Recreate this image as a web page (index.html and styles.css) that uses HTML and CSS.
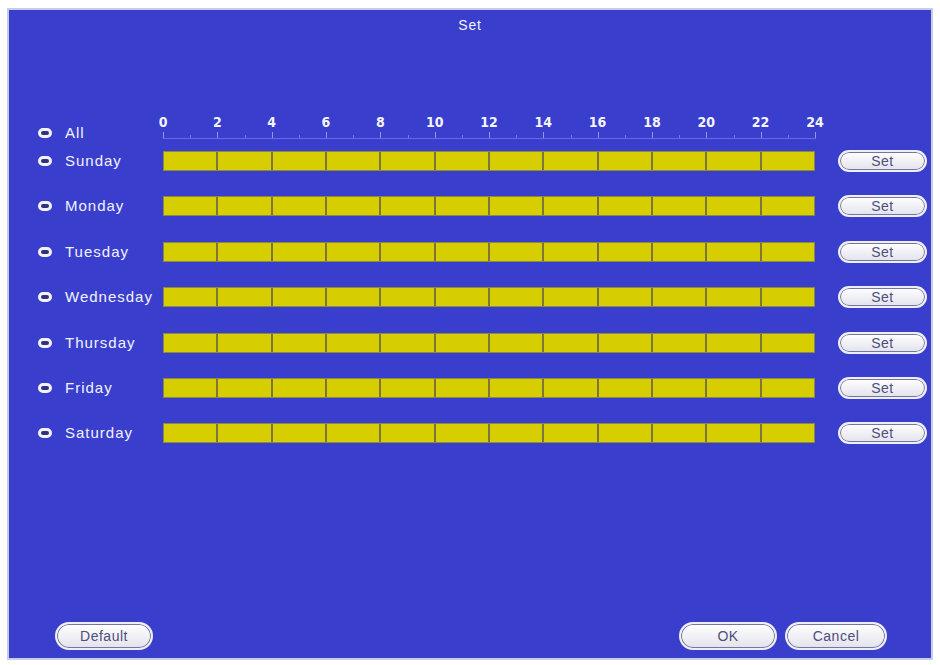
FILE: index.html
```html
<!DOCTYPE html>
<html lang="en">
<head>
    <meta charset="UTF-8">
    <meta name="viewport" content="width=device-width, initial-scale=1.0">
    <title>Set</title>
    <link rel="stylesheet" href="styles.css">
</head>
<body>
    <div id="set-panel">
        <div class="title">Set</div>

        <div class="schedule">
            <div class="row head">
                <label class="day"><span class="check"></span>All</label>
                <div class="ruler">
                    <div class="hours">
                        <span>0</span><span>2</span><span>4</span><span>6</span><span>8</span>
                        <span>10</span><span>12</span><span>14</span><span>16</span><span>18</span>
                        <span>20</span><span>22</span><span>24</span>
                    </div>
                    <div class="ticks"></div>
                </div>
            </div>

            <div class="days" id="days"></div>
        </div>

        <div class="footer">
            <button class="btn big">Default</button>
            <div class="right">
                <button class="btn big">OK</button>
                <button class="btn big wide">Cancel</button>
            </div>
        </div>
    </div>

    <script>
        var days = ['Sunday', 'Monday', 'Tuesday', 'Wednesday', 'Thursday', 'Friday', 'Saturday'];
        var list = document.getElementById('days');

        days.forEach(function (day) {
            var row = document.createElement('div');
            row.className = 'row';

            var segs = '';
            for (var i = 0; i < 12; i++) {
                segs += '<span></span>';
            }

            row.innerHTML = '<label class="day"><span class="check"></span>' + day + '</label>' +
                '<div class="bar">' + segs + '</div>' +
                '<button class="btn small">Set</button>';
            list.appendChild(row);
        });
    </script>
</body>
</html>
```

FILE: styles.css
```css
body {
    margin: 0;
    background-color: #ffffff;
    font-family: "Liberation Sans", Arial, sans-serif;
}

#set-panel {
    box-sizing: border-box;
    width: 926px;
    height: 652px;
    margin: 8px 7px 5px 7px;
    background-color: #393ecc;
    border: 2px solid #c9cce6;
    display: flex;
    flex-direction: column;
}

.title {
    margin-top: 7px;
    line-height: 17px;
    font-size: 14px;
    letter-spacing: 0.8px;
    color: #f4f4ff;
    text-align: center;
}

.schedule {
    margin-top: 81px;
    padding-left: 29px;
}

.row {
    display: grid;
    grid-template-columns: 125px 675px 89px;
    align-items: center;
    height: 20px;
}

.row.head {
    height: 30px;
    align-items: start;
    margin-bottom: 5px;
}

.row.head .day {
    margin-top: 11px;
}

.day {
    display: flex;
    align-items: center;
    line-height: 14px;
    font-size: 15px;
    letter-spacing: 1px;
    color: #f2f2ff;
    white-space: nowrap;
}

.check {
    box-sizing: border-box;
    width: 14px;
    height: 10px;
    border: 3px solid #f2f2ff;
    border-radius: 5px;
    background-color: #30327a;
    margin-right: 13px;
}

.ruler {
    width: 653px;
}

.hours {
    display: flex;
    justify-content: space-between;
    height: 15px;
    line-height: 15px;
    padding-right: 1px;
}

.hours span {
    width: 0;
    display: flex;
    justify-content: center;
    white-space: nowrap;
    font-family: "DejaVu Sans Condensed", "DejaVu Sans", sans-serif;
    font-stretch: condensed;
    font-size: 14px;
    font-weight: bold;
    color: #f4f4ff;
}

.ticks {
    height: 9px;
    background-image:
        linear-gradient(#5f6dde, #5f6dde),
        repeating-linear-gradient(90deg, #8c98ee 0 1px, transparent 1px 54.333px),
        repeating-linear-gradient(90deg, #6f7ee4 0 1px, transparent 1px 27.1667px);
    background-size: 100% 1px, 100% 7px, 100% 4px;
    background-position: 0 8px, 0 2px, 0 5px;
    background-repeat: no-repeat;
}

.days {
    display: flex;
    flex-direction: column;
    gap: 25.4px;
}

.bar {
    box-sizing: border-box;
    width: 652px;
    height: 20px;
    display: flex;
    gap: 2px;
    background-color: #7c7638;
    border: 1px solid #8d8840;
}

.bar span {
    flex: 1;
    background-color: #d6ce00;
}

.btn {
    box-sizing: border-box;
    padding: 0;
    font-family: "Liberation Sans", Arial, sans-serif;
    color: #4e4e7c;
    letter-spacing: 0.5px;
    background: linear-gradient(#ffffff, #e2e2ec);
    border: 2px solid #eeeef8;
    box-shadow: inset 0 0 0 1px #76769a;
    cursor: pointer;
}

.btn.small {
    width: 89px;
    height: 22px;
    border-radius: 11px;
    font-size: 14px;
}

.btn.big {
    width: 98px;
    height: 28px;
    border-radius: 14px;
    font-size: 14px;
}

.btn.wide {
    width: 102px;
}

.footer {
    margin-top: auto;
    display: flex;
    justify-content: space-between;
    padding: 0 44px 8px 46px;
}

.right {
    display: flex;
    gap: 8px;
}
```
